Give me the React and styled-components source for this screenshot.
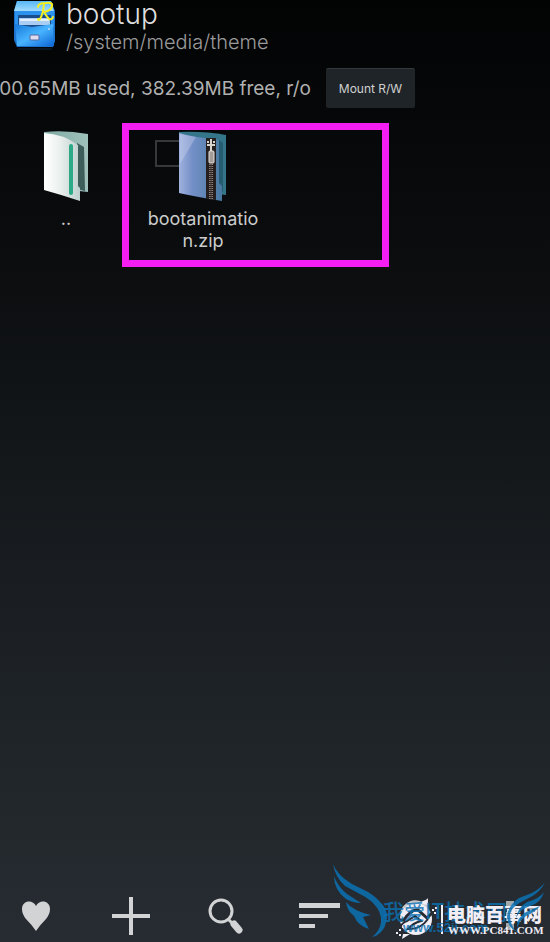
import React from 'react';
import styled, { createGlobalStyle } from 'styled-components';

const GlobalStyle = createGlobalStyle`
  * {
    box-sizing: border-box;
  }
  body {
    margin: 0;
    background: #020404;
    color: #c4c4c4;
    font-family: Inter, "Noto Sans", sans-serif;
  }
`

const Page = styled.div`
  position: relative;
  display: flex;
  flex-direction: column;
  min-height: 100vh;
  overflow: hidden;
  background: linear-gradient(#020404 0%, #050708 12%, #0b0d0f 28%, #15191c 52%, #1e2327 76%, #262b31 96%, #272c33 100%);
`

const Header = styled.header`
  display: flex;
  gap: 8px;
  height: 60px;
  padding-left: 12px;
`

const Title = styled.h1`
  margin: 0;
  color: #dedede;
  font-size: 28px;
  font-weight: 300;
  line-height: 28px;
`

const Path = styled.p`
  margin: 0;
  color: #9b9b9b;
  font-size: 20px;
  font-weight: 300;
  line-height: 28px;
`

const StatusRow = styled.div`
  display: flex;
  align-items: center;
  gap: 15px;
  height: 56px;
`

const Usage = styled.div`
  display: flex;
  justify-content: flex-end;
  width: 311px;
  overflow: hidden;
  color: #b0b0b0;
  font-size: 19px;
  font-weight: 400;
  white-space: nowrap;
`

const MountButton = styled.button`
  width: 89px;
  height: 40px;
  padding: 0;
  border: 0;
  border-top: 1px solid #33383b;
  border-radius: 2px;
  background: #1f2428;
  color: #d0d0d0;
  font: 400 12px Inter, sans-serif;
`

const Files = styled.main`
  position: relative;
  display: grid;
  grid-template-columns: 132px 142px;
  flex: 1;
  align-items: start;
  padding-top: 14px;
`

const File = styled.button`
  display: flex;
  flex-direction: column;
  align-items: center;
  gap: 6px;
  padding: 0 12px;
  border: 0;
  background: none;
  color: #cccccc;
  font: 400 18px/22px Inter, sans-serif;
  word-break: break-all;
`

const Marker = styled.div`
  position: absolute;
  top: 7px;
  left: 122px;
  width: 267px;
  height: 144px;
  border: 7px solid #f41df2;
  pointer-events: none;
`

const Toolbar = styled.nav`
  display: flex;
  align-items: center;
  justify-content: space-between;
  height: 52px;
  padding: 0 16px 0 12px;
`

const Tool = styled.button`
  display: flex;
  justify-content: center;
  width: 48px;
  padding: 0;
  border: 0;
  background: none;
`

const Watermark = styled.svg`
  position: absolute;
  right: 0;
  bottom: 0;
  pointer-events: none;
`

function Cabinet() {
  return (
    <svg width="46" height="52" viewBox="0 0 46 52" aria-hidden="true">
      <defs>
        <linearGradient id="cabinet" x1="0" y1="0" x2="1" y2="1">
          <stop offset="0" stopColor="#1677d8" />
          <stop offset=".5" stopColor="#48b4ff" />
          <stop offset="1" stopColor="#0b64d4" />
        </linearGradient>
        <linearGradient id="cabinetTop" x1="0" y1="0" x2="0" y2="1">
          <stop offset="0" stopColor="#55b6f5" />
          <stop offset="1" stopColor="#a2dcfd" />
        </linearGradient>
      </defs>
      <path d="M5 1H39L43 11V41L41 47H5L2 40V11Z" fill="#1c72cd" />
      <path d="M5 1H39L42 11H2Z" fill="url(#cabinetTop)" />
      <path d="M3 11H42V27H3Z" fill="#2b93ee" />
      <path d="M6 15H39V27H6Z" fill="#1c4d8b" />
      <path d="M7 18H38V25H7Z" fill="#a9cdf3" />
      <path d="M8 19H37V21H8Z" fill="#e3effb" />
      <path d="M3 24 20 27 41 24 42 46H5Z" fill="url(#cabinet)" />
      <rect x="18" y="35" width="9" height="5" rx="1" fill="#deddf3" stroke="#58679b" />
      <circle cx="37" cy="29" r="1" fill="#c2d9f5" />
      <path d="M6 49H40" stroke="#183e62" opacity=".6" />
      <g fill="none" stroke="#f6ef20" strokeWidth="2" strokeLinecap="round">
        <path d="M32 4Q31 14 28 19Q26 21 26 19" />
        <path d="M26 7Q26 3 34 3Q41 2 40 6Q39 11 32 12Q35 17 37 19Q40 20 41 17" />
      </g>
    </svg>
  )
}

function Folder() {
  return (
    <svg width="48" height="72" viewBox="0 0 48 72" aria-hidden="true">
      <defs>
        <linearGradient id="paper">
          <stop offset="0" stopColor="#fff" />
          <stop offset=".4" stopColor="#edf2f0" />
          <stop offset="1" stopColor="#bdd0ce" />
        </linearGradient>
        <linearGradient id="inside">
          <stop offset="0" stopColor="#7faaa5" />
          <stop offset="1" stopColor="#a0c1bc" />
        </linearGradient>
      </defs>
      <path d="M2 2Q24 0 46 4V62L37 61V70L2 58Z" fill="url(#inside)" />
      <path d="M35 13 42 17 43 61 35 59Z" fill="#3d5d5b" />
      <path d="M2 3Q21 4 36 15V56L38 58V71Q20 65 2 60Z" fill="url(#paper)" />
      <rect x="27" y="14" width="4" height="51" rx="2" fill="#2ca986" />
    </svg>
  )
}

function ZipFolder() {
  return (
    <svg width="98" height="72" viewBox="0 0 98 72" aria-hidden="true">
      <defs>
        <linearGradient id="zipCover">
          <stop offset="0" stopColor="#a0b2df" />
          <stop offset=".3" stopColor="#7590c7" />
          <stop offset="1" stopColor="#4778a0" />
        </linearGradient>
      </defs>
      <path d="M2 11H28V36H2Z" fill="none" stroke="#363939" strokeWidth="2" />
      <path d="M25 2Q50 1 72 5V65L25 60Z" fill="#34758a" />
      <path d="M65 10 69 13V62L65 60Z" fill="#265c70" />
      <path d="M25 3Q42 8 62 9L65 10V53L68 56V71Q43 67 25 63Z" fill="url(#zipCover)" />
      <path d="M26 4 42 7 26 34Z" fill="#d0d9f2" opacity=".35" />
      <path d="M52 8H62V70L52 69Z" fill="#251f20" />
      <path d="M57 34V69" stroke="#8b7f79" strokeWidth="4" strokeDasharray="1 1" />
      <path d="M57 34V69" stroke="#43352f" />
      <path d="M53 12H55M59 12H61M53 15H61M57 9V22" stroke="#d7d4cd" strokeWidth="2" />
      <rect x="55" y="21" width="5" height="12" rx="1" fill="#a39c97" stroke="#e5e2de" />
    </svg>
  )
}

export default function App() {
  return (
    <Page>
      <GlobalStyle />
      <Header>
        <Cabinet />
        <div>
          <Title>bootup</Title>
          <Path>/system/media/theme</Path>
        </div>
      </Header>
      <StatusRow>
        <Usage>600.65MB used, 382.39MB free, r/o</Usage>
        <MountButton>Mount R/W</MountButton>
      </StatusRow>
      <Files>
        <File><Folder />..</File>
        <File><ZipFolder />bootanimation.zip</File>
        <Marker />
      </Files>
      <Toolbar>
        <Tool aria-label="Favorites">
          <svg width="30" height="32" viewBox="0 0 30 32">
            <path d="M15 31Q11 25 5 19Q1 14 1 9C1 0 12-1 15 6C18-1 29 0 29 9Q29 14 25 19Q19 25 15 31Z" fill="#d2d3d4" />
          </svg>
        </Tool>
        <Tool aria-label="New">
          <svg width="38" height="38" viewBox="0 0 38 38">
            <path d="M19 0V38M0 19H38" stroke="#d2d3d4" strokeWidth="4" />
          </svg>
        </Tool>
        <Tool aria-label="Search">
          <svg width="36" height="36" viewBox="0 0 36 36">
            <circle cx="13" cy="13" r="11" fill="none" stroke="#d2d3d4" strokeWidth="3" />
            <path d="M20 21 25 26" stroke="#d2d3d4" strokeWidth="3" />
            <path d="M26 26 31 32" stroke="#d2d3d4" strokeWidth="7" strokeLinecap="round" />
          </svg>
        </Tool>
        <Tool aria-label="Sort">
          <svg width="42" height="26" viewBox="0 0 42 26">
            <path d="M0 0H41V5H0ZM0 11H29V15H0ZM0 21H16V25H0Z" fill="#d2d3d4" />
          </svg>
        </Tool>
        <Tool aria-label="Refresh">
          <svg width="32" height="36" viewBox="0 0 32 36">
            <path d="M3 17A13 13 0 0 1 26 9M29 19A13 13 0 0 1 6 27" fill="none" stroke="#c6c9cb" strokeWidth="4" />
            <path d="M29 0V13H17Z" fill="#c6c9cb" />
          </svg>
        </Tool>
        <Tool aria-label="More">
          <svg width="8" height="30" viewBox="0 0 8 30">
            <path d="M0 0H8V7H0ZM0 11H8V18H0ZM0 22H8V29H0Z" fill="#a3a9ad" />
          </svg>
        </Tool>
      </Toolbar>
      <Watermark width="220" height="82" viewBox="330 860 220 82" aria-hidden="true">
        <g fill="#f2eef5">
          <circle cx="416" cy="919" r="16" />
          <path d="M418 903 428 899 427 905Z" />
          <path d="M403 934 402 939 410 934Z" />
          <path d="M396 932h2v2h-2zM399 929h2v2h-2zM399 934h2v2h-2zM402 926h2v2h-2zM432 909h2v2h-2zM435 907h2v2h-2zM434 912h2v2h-2z" />
          <g fill="none" stroke="#272c33" strokeWidth="3">
            <path d="M399 920 404 920Q411 909 418 910L427 918 433 912" />
            <path d="M399 928Q403 922 407 921L415 916 421 921Q413 923 408 929Q420 930 428 919" strokeWidth="2" />
          </g>
          <path d="M441 905H443V934H441Z" />
        </g>
        <g fill="#0b72b4" opacity=".8">
          <text x="383" y="919" fontFamily="Noto Sans CJK SC, sans-serif" fontSize="21" fontWeight="500">我爱IT技术网</text>
          <text x="403" y="932" fontFamily="Liberation Sans, sans-serif" fontSize="13" fontWeight="700">www.52ij.com</text>
        </g>
        <g fill="#f2eef5">
          <text x="447" y="922" fontFamily="Noto Sans CJK SC, sans-serif" fontSize="19" fontWeight="900">电脑百事网</text>
          <text x="448" y="934" fontFamily="Liberation Serif, serif" fontSize="11" fontWeight="700">WWW.PC841.COM</text>
        </g>
        <g fill="#0b72b4" opacity=".85">
          <path d="M333 864Q337 875 352 884L368 892Q376 897 380 902Q387 908 387 917Q386 928 380 933Q377 936 372 937Q380 931 381 922Q382 912 373 903Q368 898 358 893L345 886Q335 877 333 864Z" />
          <path d="M334 876Q338 887 347 894L361 903Q353 903 346 899Q334 890 334 876Z" />
          <path d="M346 902Q353 911 371 915L363 917 369 929Q358 926 354 916Q347 911 346 902Z" />
          <path d="M545 882Q541 893 525 900Q512 906 510 914Q510 926 517 932Q508 928 507 917Q508 905 519 898L532 893Q541 888 545 882Z" />
          <path d="M544 892Q541 903 530 906Q519 910 516 918Q518 907 527 902Q539 899 544 892Z" />
          <path d="M540 906Q534 913 526 916Q520 920 517 928Q516 918 526 912Z" />
        </g>
      </Watermark>
    </Page>
  )
}
